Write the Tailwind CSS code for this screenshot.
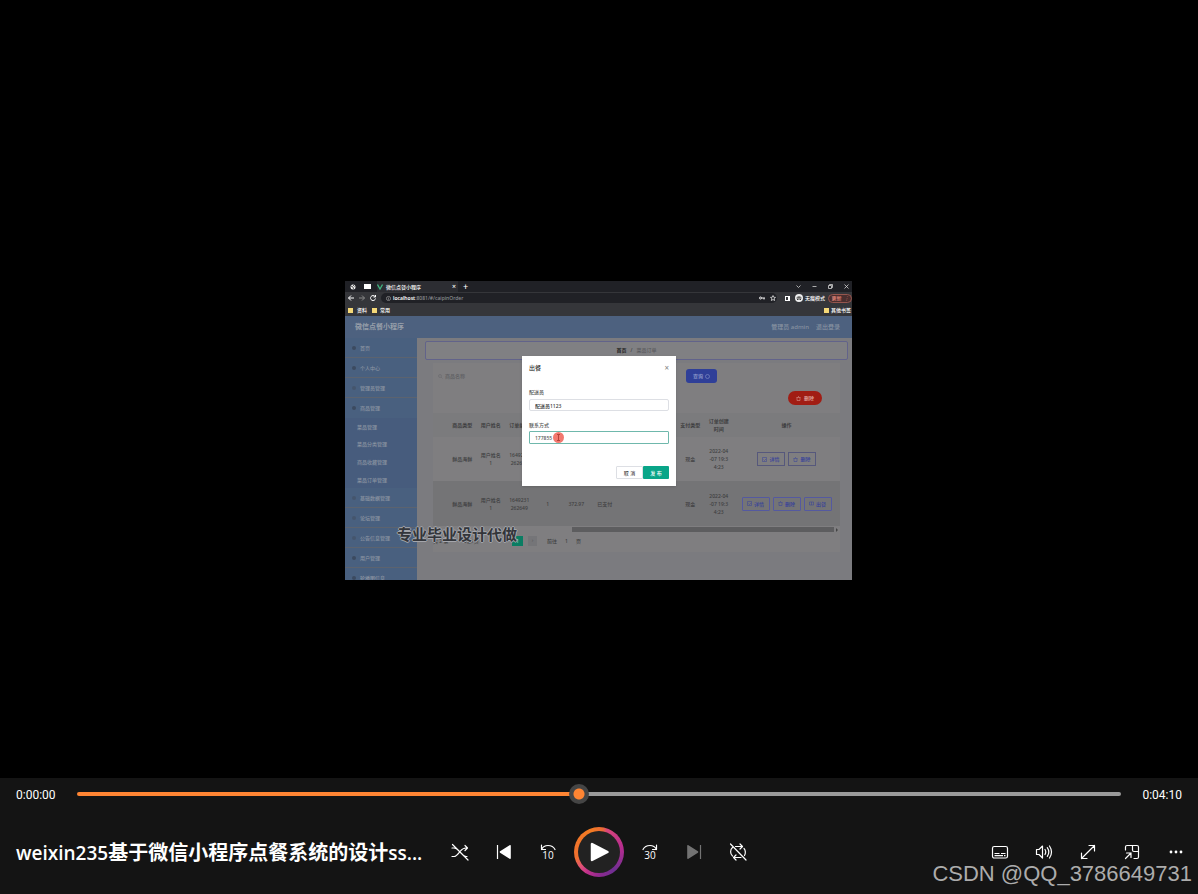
<!DOCTYPE html>
<html lang="zh-CN">
<head>
<meta charset="utf-8">
<meta name="viewport" content="width=device-width, initial-scale=1">
<title>weixin235</title>
<script src="https://cdn.jsdelivr.net/npm/@tailwindcss/browser@4"></script>
</head>
<body class="relative flex min-h-screen flex-col bg-black font-['Open_Sans','Noto_Sans_CJK_SC',sans-serif] text-white">

<!-- Video stage -->
<main class="flex flex-1 items-center justify-center pt-[83px] pr-px">
  <section class="relative flex w-[507px] flex-col overflow-hidden bg-[#7b7b7f] font-['Noto_Sans','Noto_Sans_CJK_SC',sans-serif] text-[5px] leading-[8px] font-medium">

    <!-- Browser tabs -->
    <div class="flex h-[11px] items-center bg-[#202126]">
      <div class="flex w-8 items-center gap-2 pl-[5px]">
        <svg class="size-[6px]" viewBox="0 0 12 12"><circle cx="6" cy="6" r="5" fill="#eee"/><path d="M2 4l4 2 1 4M6 2l3 3" stroke="#222" stroke-width="1.5" fill="none"/></svg>
        <span class="h-[5px] w-[7px] bg-white"></span>
      </div>
      <div class="flex h-full w-[81px] items-center justify-between bg-[#2c2d32] pr-[2px]">
        <span class="flex items-center gap-[3px]">
          <svg class="size-[6px]" viewBox="0 0 12 12"><path d="M1 1l5 9 5-9" fill="none" stroke="#41b883" stroke-width="2.5"/></svg>
          微信点餐小程序
        </span>
        <span class="text-[7px]">×</span>
      </div>
      <span class="pl-[5px] text-[9px]">+</span>
      <div class="ml-auto flex items-center gap-[11px] pr-[3px]">
        <svg class="size-[5px]" viewBox="0 0 10 10" fill="none" stroke="#ddd" stroke-width="1.5"><path d="M1 3l4 4 4-4"/></svg>
        <svg class="size-[5px]" viewBox="0 0 10 10" fill="none" stroke="#ddd" stroke-width="1.5"><path d="M1 5h8"/></svg>
        <svg class="size-[5px]" viewBox="0 0 10 10" fill="none" stroke="#ddd" stroke-width="1.5"><path d="M1 3h6v6h-6zM3 3v-2h6v6h-2"/></svg>
        <svg class="size-[5px]" viewBox="0 0 10 10" fill="none" stroke="#ddd" stroke-width="1.5"><path d="M1 1l8 8M9 1l-8 8"/></svg>
      </div>
    </div>

    <!-- Address bar -->
    <div class="flex h-3 items-center bg-[#35363a]">
      <svg class="mx-[3px] size-[6px]" viewBox="0 0 12 12" fill="none" stroke="#fff" stroke-width="2"><path d="M12 6H1M6 1L1 6l5 5"/></svg>
      <svg class="mx-[2px] size-[6px]" viewBox="0 0 12 12" fill="none" stroke="#888" stroke-width="2"><path d="M0 6h11M6 1l5 5-5 5"/></svg>
      <svg class="mx-[3px] size-[6px]" viewBox="0 0 12 12" fill="none" stroke="#fff" stroke-width="2"><path d="M10 3a5 5 0 1 0 1 4M11 0v4H7"/></svg>
      <div class="ml-[2px] flex h-[10px] flex-1 items-center gap-[2px] rounded-full bg-[#202126] pr-px pl-[5px] text-[#8e9094]">
        <svg class="size-[5px]" viewBox="0 0 12 12" fill="none" stroke="#aaa" stroke-width="1.5"><circle cx="6" cy="6" r="5"/><path d="M6 5v4M6 3v1"/></svg>
        <span><b class="font-semibold text-white">localhost</b>:8081/#/caipinOrder</span>
        <svg class="ml-auto h-[4px] w-[6px]" viewBox="0 0 12 8" fill="none" stroke="#eee" stroke-width="2"><circle cx="3" cy="4" r="2"/><path d="M5 4h7M10 4v3"/></svg>
        <svg class="ml-[3px] size-[6px]" viewBox="0 0 12 12" fill="none" stroke="#eee" stroke-width="1.5"><path d="M6 1l1.500 3.500 3.500.3-2.700 2.400.9 3.800L6 9l-3.200 2 .9-3.800L1 4.800l3.500-.3z"/></svg>
      </div>
      <span class="mr-[5px] ml-[8px] size-[5px] border border-r-2 border-white"></span>
      <svg class="mr-[2px] size-[8px]" viewBox="0 0 16 16"><circle cx="8" cy="8" r="8" fill="#eee"/><path d="M3 8h10M5 6h6M4 11h3M9 11h3" stroke="#333" stroke-width="2"/></svg>
      <span class="whitespace-nowrap">无痕模式</span>
      <span class="ml-[3px] flex h-[9px] w-6 items-center justify-center gap-[2px] rounded-full border border-[#96564e] bg-[#4a2f2f] text-[#e8887c]">更新<i>⋮</i></span>
    </div>

    <!-- Bookmarks -->
    <div class="flex h-3 items-center bg-[#35363a] pl-[3px] pr-px">
      <span class="mr-[4px] h-[5px] w-[5px] bg-[#f4d878]"></span><span>资料</span>
      <span class="mr-[3px] ml-[5px] h-[5px] w-[5px] bg-[#f4d878]"></span><span>常用</span>
      <span class="mr-[2px] ml-auto h-[5px] w-[5px] bg-[#f4d878]"></span><span>其他书签</span>
    </div>

    <!-- App header -->
    <header class="flex h-[22px] items-center bg-[#4d617f] pr-[12px] pl-[10px] text-[#8792a1]">
      <h2 class="text-[7px] font-bold text-[#979faa]">微信点餐小程序</h2>
      <span class="ml-auto text-[6px]">管理员 admin</span>
      <a href="#" class="ml-[7px] text-[6px]">退出登录</a>
    </header>

    <div class="flex h-[242px]">
      <!-- Sidebar -->
      <nav class="w-[72px] shrink-0 overflow-hidden bg-[#49607f] text-[#8993a1]">
        <a href="#" class="flex h-5 items-center gap-[4px] border-b border-[#5c636f] pl-[7px]"><i class="size-[4px] rounded-full bg-[#3c4a60]"></i>首页</a>
        <a href="#" class="flex h-5 items-center gap-[4px] border-b border-[#5c636f] pl-[7px]"><i class="size-[4px] rounded-full bg-[#3c4a60]"></i>个人中心</a>
        <a href="#" class="flex h-5 items-center gap-[4px] border-b border-[#5c636f] pl-[7px]"><i class="size-[4px] rounded-full bg-[#45556d]"></i>管理员管理</a>
        <a href="#" class="flex h-5 items-center gap-[4px] pl-[7px]"><i class="size-[4px] rounded-full bg-[#3c4a60]"></i>商品管理</a>
        <div class="bg-[#475c7d]">
          <a href="#" class="flex h-[17px] items-center pl-3">菜品管理</a>
          <a href="#" class="flex h-[18px] items-center pl-3">菜品分类管理</a>
          <a href="#" class="flex h-[18px] items-center pl-3">商品收藏管理</a>
          <a href="#" class="flex h-[17px] items-center pl-3">菜品订单管理</a>
        </div>
        <a href="#" class="flex h-5 items-center gap-[4px] border-b border-[#5c636f] pl-[7px]"><i class="size-[4px] rounded-full bg-[#45556d]"></i>基础数据管理</a>
        <a href="#" class="flex h-5 items-center gap-[4px] border-b border-[#5c636f] pl-[7px]"><i class="size-[4px] rounded-full bg-[#45556d]"></i>论坛管理</a>
        <a href="#" class="flex h-5 items-center gap-[4px] border-b border-[#5c636f] pl-[7px]"><i class="size-[4px] rounded-full bg-[#45556d]"></i>公告信息管理</a>
        <a href="#" class="flex h-5 items-center gap-[4px] border-b border-[#5c636f] pl-[7px]"><i class="size-[4px] rounded-full bg-[#3c4a60]"></i>用户管理</a>
        <a href="#" class="flex h-5 items-center gap-[4px] pl-[7px]"><i class="size-[4px] rounded-full bg-[#3c4a60]"></i>轮播图信息</a>
      </nav>

      <!-- Content -->
      <div class="flex min-w-0 flex-1 flex-col pt-[3px] pr-[4px] pl-[8px] text-[#3e3e40]">
        <div class="flex h-[19px] items-center justify-center gap-[4px] rounded-xs border border-[#62638a] bg-[#808083] pb-px"><b class="text-[#222]">首页</b><span>/</span><span class="text-[#5a5a5e]">菜品订单</span></div>
        <div class="mx-[8px] mt-[3px] flex flex-col bg-[#7f7e80] pb-[5px]">
          <div class="flex h-[26px] items-center pl-[5px]">
            <span class="flex w-[248px] items-center gap-[2px] text-[#5e5e62]"><svg class="size-[5px]" viewBox="0 0 10 10" fill="none" stroke="#66666a"><circle cx="4" cy="4" r="3"/><path d="M6 6l3 3"/></svg>商品名称</span>
            <button class="flex h-[14px] w-[31px] items-center justify-center gap-[2px] rounded-[3px] bg-[#2f3f98] text-[#9aa2d0]">查询<svg class="size-[5px]" viewBox="0 0 10 10" fill="none" stroke="#9aa2d0"><circle cx="5" cy="5" r="4"/></svg></button>
          </div>
          <button class="mt-[2px] mr-[18px] flex h-[14px] w-[34px] items-center justify-center gap-[3px] self-end rounded-full bg-[#a11d14] text-[#e0aaa4]"><svg class="size-[5px]" viewBox="0 0 10 10" fill="none" stroke="currentColor"><path d="M1 3h8M2 3v6h6V3M4 1h2"/></svg>删除</button>
          <table class="mt-[8px] w-full table-fixed border-collapse text-center">
            <colgroup><col class="w-[15px]"><col span="10"><col class="w-[107px]"></colgroup>
            <thead><tr class="h-6 bg-[#7b7b7d]">
              <th></th><th class="p-0 font-semibold">商品类型</th><th class="p-0 font-semibold">用户姓名</th><th class="p-0 font-semibold">订单编号</th><th></th><th></th><th></th><th></th><th></th><th class="p-0 font-semibold">支付类型</th><th class="px-[3px] py-0 font-semibold">订单创建时间</th><th class="p-0 font-semibold">操作</th>
            </tr></thead>
            <tbody>
              <tr class="h-[44px]">
                <td></td><td class="p-0">鲜品海鲜</td><td class="p-0">用户姓名<br>1</td><td class="p-0">1649231<br>262649</td><td></td><td></td><td></td><td></td><td></td><td class="p-0">现金</td><td class="p-0">2022-04<br>-07 19:3<br>4:23</td>
                <td class="p-0"><div class="flex justify-center gap-[3px] text-[#36419a]">
                  <button class="flex h-[14px] w-7 items-center justify-center gap-[2px] border border-[#56587c]"><svg class="size-[5px]" viewBox="0 0 10 10" fill="none" stroke="currentColor"><path d="M1 1h8v8h-8zM3 5l2 2 3-3"/></svg>详情</button>
                  <button class="flex h-[14px] w-7 items-center justify-center gap-[2px] border border-[#56587c]"><svg class="size-[5px]" viewBox="0 0 10 10" fill="none" stroke="currentColor"><path d="M1 3h8M2 3v6h6V3M4 1h2"/></svg>删除</button>
                </div></td>
              </tr>
              <tr class="h-[45px] bg-[#747476]">
                <td></td><td class="p-0">鲜品海鲜</td><td class="p-0">用户姓名<br>1</td><td class="p-0">1649231<br>262649</td><td class="p-0">1</td><td class="p-0">372.97</td><td class="p-0">已支付</td><td></td><td></td><td class="p-0">现金</td><td class="p-0">2022-04<br>-07 19:3<br>4:23</td>
                <td class="p-0"><div class="flex justify-center gap-[3px] text-[#36419a]">
                  <button class="flex h-[14px] w-7 items-center justify-center gap-[2px] rounded-[1px] border border-[#5459a0]"><svg class="size-[5px]" viewBox="0 0 10 10" fill="none" stroke="currentColor"><path d="M1 1h8v8h-8zM3 5l2 2 3-3"/></svg>详情</button>
                  <button class="flex h-[14px] w-7 items-center justify-center gap-[2px] rounded-[1px] border border-[#5459a0]"><svg class="size-[5px]" viewBox="0 0 10 10" fill="none" stroke="currentColor"><path d="M1 3h8M2 3v6h6V3M4 1h2"/></svg>删除</button>
                  <button class="flex h-[14px] w-7 items-center justify-center gap-[2px] rounded-[1px] border border-[#5459a0]"><svg class="size-[5px]" viewBox="0 0 10 10" fill="none" stroke="currentColor"><path d="M1 2h8v6h-8zM5 2v6"/></svg>出餐</button>
                </div></td>
              </tr>
            </tbody>
          </table>
          <div class="mt-[1px] flex items-center justify-end gap-[2px] pr-[2px]"><span class="h-[5px] w-[262px] bg-[#5d5d5f]"></span><span class="h-0 w-0 border-y-2 border-l-2 border-y-transparent border-l-[#444]"></span></div>
          <div class="flex h-[15px] items-center pt-[2px]">
            <span class="w-7">共 2 条</span><span class="w-[51px]">10条/页</span>
            <span class="h-[10px] w-[11px] bg-[#0b7d63] text-center leading-[10px] text-[#a5d0c4]">1</span>
            <span class="mx-[5px] h-[10px] w-[9px] bg-[#757578] text-center leading-[8px] text-[#55555a]">›</span>
            <span class="pl-[5px]">前往</span><span class="px-2">1</span><span>页</span>
          </div>
        </div>
      </div>
    </div>

    <!-- Dialog over the page -->
    <form class="absolute top-[75px] left-[177px] flex w-[154px] flex-col bg-white px-[7px] py-[7px] text-[#555] shadow-sm" onsubmit="return false">
      <div class="flex h-[9px] items-center justify-between"><h3 class="text-[6px] text-[#333]">出餐</h3><button type="button" aria-label="关闭" class="text-[8px] leading-[8px] text-[#888]">×</button></div>
      <label for="courier" class="mt-[16px] h-[11px]">配送员</label>
      <input id="courier" value="配送员1123" class="h-[12px] w-full rounded-[2px] border border-[#dddfe4] px-[5px] leading-[8px] text-[#333]">
      <label for="phone" class="mt-[10px] h-[10px]">联系方式</label>
      <input id="phone" value="177855" class="h-[13px] w-full rounded-[1px] border border-[#6fb8ac] px-[5px] leading-[8px] text-[#555]">
      <div class="mt-[22px] flex justify-end">
        <button type="button" class="h-[13px] w-[27px] rounded-[1px] border border-[#dddfe4]">取 消</button>
        <button class="h-[13px] w-[26px] rounded-[1px] bg-[#09a588] text-white">发 布</button>
      </div>
      <span class="absolute top-[76px] left-[31px] flex size-[11px] items-center justify-center rounded-full bg-[#f2786f]"><svg class="h-[7px] w-[5px]" viewBox="0 0 10 14" fill="none" stroke="#b8423b" stroke-width="2"><path d="M2 1h6M5 1v12M2 13h6"/></svg></span>
    </form>

    <!-- Subtitle burned into the video -->
    <p class="absolute top-[242px] left-[52px] text-[15px] leading-[22px] font-bold whitespace-nowrap text-[#33353a] [text-shadow:1px_0_0_#a4a6ac,-1px_0_0_#a4a6ac,0_1px_0_#a4a6ac,0_-1px_0_#a4a6ac]">专业毕业设计代做</p>
  </section>
</main>

<!-- Player controls -->
<footer class="h-[116px] bg-[#141414]">
  <div class="flex h-8 items-center px-4 text-xs">
    <span class="w-[61px] pt-px font-['Roboto',sans-serif]">0:00:00</span>
    <input type="range" aria-label="播放进度" min="0" max="1000" value="480" class="h-5 min-w-0 flex-1 appearance-none bg-transparent [&::-webkit-slider-runnable-track]:h-1 [&::-webkit-slider-runnable-track]:rounded-full [&::-webkit-slider-runnable-track]:bg-[linear-gradient(to_right,#ff8533_48%,#9a9a9a_48%)] [&::-webkit-slider-thumb]:-mt-2 [&::-webkit-slider-thumb]:size-5 [&::-webkit-slider-thumb]:appearance-none [&::-webkit-slider-thumb]:rounded-full [&::-webkit-slider-thumb]:bg-[radial-gradient(circle,#ff8533_5px,#454545_6px)]">
    <span class="w-[61px] pt-px text-right font-['Roboto',sans-serif]">0:04:10</span>
  </div>
  <div class="flex h-[84px] items-center">
    <div class="min-w-0 flex-1">
      <h1 class="truncate pt-px pl-4 text-[19px] leading-7 font-semibold">weixin235<span class="text-xl font-bold">基于微信小程序点餐系统的设计</span>ss...</h1>
    </div>
    <div class="flex items-center">
      <button aria-label="随机播放" class="flex size-11 items-center justify-center"><svg class="size-[18px]" viewBox="0 0 18 18" fill="none" stroke="#fff" stroke-width="1.2" stroke-linecap="round" stroke-linejoin="round"><path d="M1 5h2c2.500 0 4 2 6 4S12.500 13.500 15 13.500h1M1 13.500h2c2.500 0 4-2.500 6-5S12.500 5 15 5h1.500M14 2.500L16.500 5 14 7.500M1.500 1.500l15.500 15.500"/></svg></button>
      <button aria-label="上一个" class="flex size-11 items-center justify-center"><svg class="size-[16px]" viewBox="0 0 16 16"><path d="M1.500 1v14" stroke="#fff" stroke-width="1.2"/><path d="M14 1.800v12.400L4.500 8z" fill="#fff" stroke="#fff" stroke-width="1.600" stroke-linejoin="round"/></svg></button>
      <button aria-label="后退 10 秒" class="flex size-11 items-center justify-center"><svg class="size-[18px]" viewBox="0 0 18 18" fill="none" stroke="#fff" stroke-width="1.2" stroke-linecap="round" stroke-linejoin="round"><path d="M2.500 2v4.500H6.500M2.500 6.500C4 3.500 6.500 2.500 9 2.500s5.500 1 7 4"/><text x="9" y="16" text-anchor="middle" font-size="10" fill="#fff" stroke="none" font-family="Open Sans" font-weight="500">10</text></svg></button>
      <button aria-label="播放" class="mx-1 flex size-[50px] items-center justify-center rounded-full bg-[conic-gradient(from_20deg,#d9467a,#b52c8f_60deg,#6f2f92_120deg,#8a2a90_155deg,#c0308c_190deg,#e0507a_210deg,#f07030_235deg,#f37b22_320deg,#ea6a38_350deg,#d9467a)]">
        <span class="flex size-[42px] items-center justify-center rounded-full bg-[#222]"><svg class="size-[22px]" viewBox="0 0 22 22"><path d="M4 3v16l15.500-8z" fill="#fff" stroke="#fff" stroke-width="2.500" stroke-linejoin="round"/></svg></span>
      </button>
      <button aria-label="快进 30 秒" class="flex size-11 items-center justify-center"><svg class="size-[18px]" viewBox="0 0 18 18" fill="none" stroke="#fff" stroke-width="1.2" stroke-linecap="round" stroke-linejoin="round"><path d="M15.500 2v4.500H11.500M15.500 6.500C14 3.500 11.500 2.500 9 2.500s-5.500 1-7 4"/><text x="9" y="16" text-anchor="middle" font-size="10" fill="#fff" stroke="none" font-family="Open Sans" font-weight="500">30</text></svg></button>
      <button aria-label="下一个" disabled class="flex size-11 items-center justify-center"><svg class="size-[16px]" viewBox="0 0 16 16"><path d="M14.500 1v14" stroke="#737373" stroke-width="1.2"/><path d="M2 1.800v12.400L11.500 8z" fill="#737373" stroke="#737373" stroke-width="1.600" stroke-linejoin="round"/></svg></button>
      <button aria-label="循环关闭" class="flex size-11 items-center justify-center"><svg class="size-[18px]" viewBox="0 0 18 18" fill="none" stroke="#fff" stroke-width="1.2" stroke-linecap="round" stroke-linejoin="round"><path d="M6.500 3.500H13M11 1l2.500 2.500L11 6M15 5.500c1.700 1.700 1.700 5 .5 7M3.500 4.500C1 6.500 1 11 3.500 13M12 14.500H5M7 12l-2.500 2.500L7 17M1.500 1l15.500 16"/></svg></button>
    </div>
    <div class="flex flex-1 justify-end">
      <button aria-label="字幕" class="flex size-11 items-center justify-center"><svg class="size-[18px]" viewBox="0 0 18 18" fill="none" stroke="#fff" stroke-width="1.2"><rect x="1.500" y="3.500" width="15" height="11.500" rx="1.800"/><path d="M3.500 10.500h5M10 10.500h4.500M3.500 12.700h8.500M13 12.700h1.500"/></svg></button>
      <button aria-label="音量" class="flex size-11 items-center justify-center"><svg class="size-[18px]" viewBox="0 0 18 18" fill="none" stroke="#fff" stroke-width="1.2" stroke-linecap="round" stroke-linejoin="round"><path d="M1.500 6.500v5H4l3.500 3.500V3L4 6.500zM10 6.500q1.500 2.500 0 5M12.300 4.700q3 4.300 0 8.600M14.500 3q4 6 0 12"/></svg></button>
      <button aria-label="全屏" class="flex size-11 items-center justify-center"><svg class="size-[18px]" viewBox="0 0 18 18" fill="none" stroke="#fff" stroke-width="1.2" stroke-linecap="round" stroke-linejoin="round"><path d="M2.500 15.500l13-13M10 2.500h5.500V8M2.500 10v5.500H8"/></svg></button>
      <button aria-label="迷你播放器" class="flex size-11 items-center justify-center"><svg class="size-[18px]" viewBox="0 0 18 18" fill="none" stroke="#fff" stroke-width="1.2" stroke-linecap="round" stroke-linejoin="round"><path d="M2.500 7V4c0-1 .5-1.500 1.500-1.500h10c1 0 1.500.5 1.500 1.500v10c0 1-.5 1.500-1.500 1.500h-3M9.500 2.500V7c0 1 .5 1.500 1.500 1.500h4.500M2.500 15.500L8 10M3.500 10H8v4.500"/></svg></button>
      <button aria-label="更多" class="flex size-11 items-center justify-center"><svg class="size-[18px]" viewBox="0 0 18 18" fill="#fff"><circle cx="4" cy="9" r="1.400"/><circle cx="9" cy="9" r="1.400"/><circle cx="14" cy="9" r="1.400"/></svg></button>
    </div>
  </div>
</footer>

<!-- Watermark -->
<p class="pointer-events-none absolute right-[6px] bottom-[6px] font-['Liberation_Sans',sans-serif] text-[22px] leading-7 text-[#acacac]">CSDN @QQ_3786649731</p>
</body>
</html>
